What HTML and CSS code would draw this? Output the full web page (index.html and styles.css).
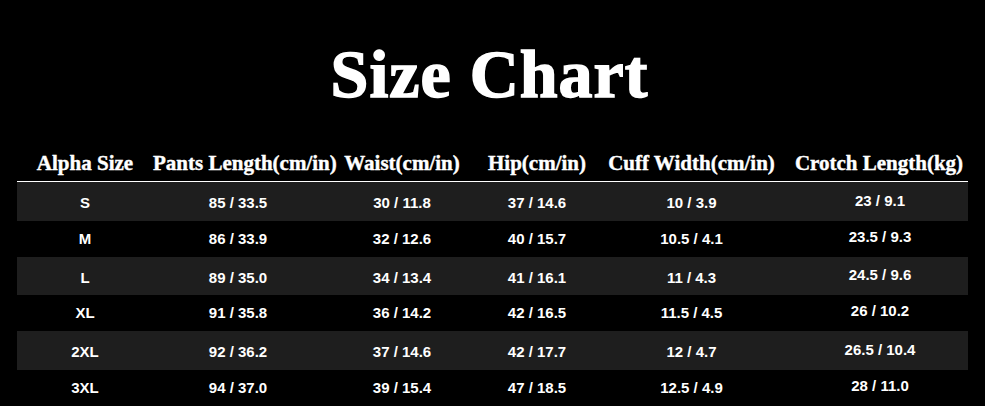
FILE: index.html
```html
<!DOCTYPE html>
<html>
<head>
<meta charset="utf-8">
<link rel="stylesheet" href="styles.css">
</head>
<body>
<h1 class="title">Size Chart</h1>
<div class="chart">
  <div class="row head">
    <div class="cell">Alpha Size</div>
    <div class="cell">Pants Length(cm/in)</div>
    <div class="cell">Waist(cm/in)</div>
    <div class="cell">Hip(cm/in)</div>
    <div class="cell">Cuff Width(cm/in)</div>
    <div class="cell">Crotch Length(kg)</div>
  </div>
  <div class="row alt">
    <div class="cell">S</div><div class="cell">85 / 33.5</div><div class="cell">30 / 11.8</div><div class="cell">37 / 14.6</div><div class="cell">10 / 3.9</div><div class="cell up">23 / 9.1</div>
  </div>
  <div class="row">
    <div class="cell">M</div><div class="cell">86 / 33.9</div><div class="cell">32 / 12.6</div><div class="cell">40 / 15.7</div><div class="cell">10.5 / 4.1</div><div class="cell up">23.5 / 9.3</div>
  </div>
  <div class="row alt">
    <div class="cell">L</div><div class="cell">89 / 35.0</div><div class="cell">34 / 13.4</div><div class="cell">41 / 16.1</div><div class="cell">11 / 4.3</div><div class="cell up">24.5 / 9.6</div>
  </div>
  <div class="row">
    <div class="cell">XL</div><div class="cell">91 / 35.8</div><div class="cell">36 / 14.2</div><div class="cell">42 / 16.5</div><div class="cell">11.5 / 4.5</div><div class="cell up">26 / 10.2</div>
  </div>
  <div class="row alt">
    <div class="cell">2XL</div><div class="cell">92 / 36.2</div><div class="cell">37 / 14.6</div><div class="cell">42 / 17.7</div><div class="cell">12 / 4.7</div><div class="cell up">26.5 / 10.4</div>
  </div>
  <div class="row">
    <div class="cell">3XL</div><div class="cell">94 / 37.0</div><div class="cell">39 / 15.4</div><div class="cell">47 / 18.5</div><div class="cell">12.5 / 4.9</div><div class="cell up">28 / 11.0</div>
  </div>
</div>
</body>
</html>
```

FILE: styles.css
```css
html, body {
  margin: 0;
  padding: 0;
  background: #000;
  color: #fff;
}
body {
  width: 985px;
  height: 406px;
  overflow: hidden;
}
.title {
  margin: 0;
  padding-top: 40px;
  padding-right: 6px;
  height: 145px;
  box-sizing: border-box;
  font-family: "Liberation Serif", serif;
  font-weight: bold;
  font-size: 68px;
  line-height: 68px;
  letter-spacing: 1px;
  text-align: center;
  -webkit-text-stroke: 1.5px #fff;
}
.chart {
  margin-left: 17px;
  width: 951px;
}
.row {
  display: grid;
  grid-template-columns: 136px 170px 158px 112px 197px 178px;
  height: 36px;
  align-items: center;
  font-family: "Liberation Sans", Arial, sans-serif;
  font-weight: bold;
  font-size: 15px;
}
.row.alt {
  background: #1e1e1e;
  height: 38.5px;
}
.row.alt .cell {
  padding-top: 4px;
}
.row.head {
  height: 36px;
  border-bottom: 1px solid #fff;
  font-family: "Liberation Serif", serif;
  font-size: 21px;
  white-space: nowrap;
  -webkit-text-stroke: 0.4px #fff;
}
.row.head .cell {
  line-height: 36px;
}
.cell {
  text-align: center;
  line-height: 18px;
}
.row .cell.up {
  padding-top: 0;
  padding-bottom: 4px;
  padding-left: 2px;
}
.row.alt .cell.up {
  padding-top: 0;
  padding-bottom: 1px;
}
```
